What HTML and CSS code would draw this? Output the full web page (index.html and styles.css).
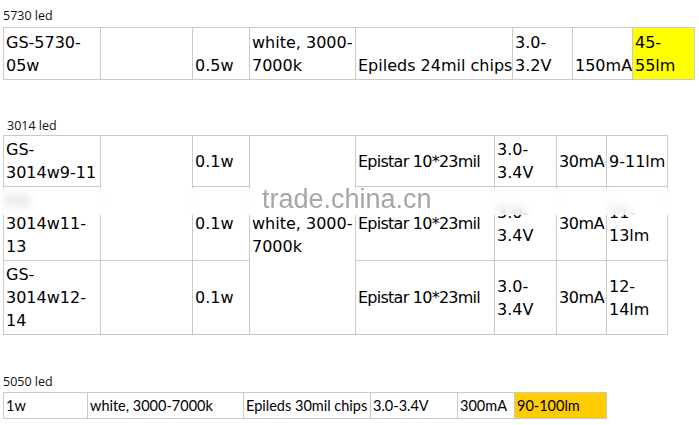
FILE: index.html
```html
<!DOCTYPE html>
<html lang="en">
<head>
<meta charset="utf-8">
<title>LED specs</title>
<link rel="stylesheet" href="styles.css">
</head>
<body>
<main class="page">
  <section class="block block-5730">
    <p class="label">5730 led</p>
    <table class="spec t1">
      <colgroup>
        <col class="c97"><col class="c92"><col class="c57"><col class="c106"><col class="c157"><col class="c60"><col class="c60"><col class="c62">
      </colgroup>
      <tr>
        <td>GS-5730-<br>05w</td>
        <td></td>
        <td>0.5w</td>
        <td>white, 3000-<br>7000k</td>
        <td>Epileds 24mil chips</td>
        <td>3.0-<br>3.2V</td>
        <td>150mA</td>
        <td class="hl-yellow">45-<br>55lm</td>
      </tr>
    </table>
  </section>

  <section class="block block-3014">
    <p class="label label-indent">3014 led</p>
    <table class="spec t2">
      <colgroup>
        <col class="c97"><col class="c92"><col class="c57"><col class="c106"><col class="c139"><col class="c62"><col class="c50"><col class="c61">
      </colgroup>
      <tr>
        <td>GS-<br>3014w9-11</td>
        <td rowspan="2"></td>
        <td>0.1w</td>
        <td rowspan="3">white, 3000-<br>7000k</td>
        <td class="tight">Epistar 10*23mil</td>
        <td>3.0-<br>3.4V</td>
        <td class="narrow">30mA</td>
        <td>9-11lm</td>
      </tr>
      <tr>
        <td>GS-<br>3014w11-<br>13</td>
        <td>0.1w</td>
        <td class="tight">Epistar 10*23mil</td>
        <td>3.0-<br>3.4V</td>
        <td class="narrow">30mA</td>
        <td>11-<br>13lm</td>
      </tr>
      <tr>
        <td>GS-<br>3014w12-<br>14</td>
        <td></td>
        <td>0.1w</td>
        <td class="tight">Epistar 10*23mil</td>
        <td>3.0-<br>3.4V</td>
        <td class="narrow">30mA</td>
        <td>12-<br>14lm</td>
      </tr>
    </table>
  </section>

  <section class="block block-5050">
    <p class="label">5050 led</p>
    <table class="spec t3">
      <colgroup>
        <col class="c84"><col class="c156"><col class="c127"><col class="c87"><col class="c57"><col class="c92">
      </colgroup>
      <tr>
        <td>1w</td>
        <td>white, 3000-7000k</td>
        <td>Epileds 30mil chips</td>
        <td>3.0-3.4V</td>
        <td>300mA</td>
        <td class="hl-orange">90-100lm</td>
      </tr>
    </table>
  </section>

  <div class="watermark" aria-hidden="true">
    <span class="wm-text">trade.china.cn</span>
  </div>
</main>
</body>
</html>
```

FILE: styles.css
```css
html, body {
  margin: 0;
  padding: 0;
  background: #ffffff;
}

.page {
  position: relative;
  width: 699px;
  height: 425px;
  overflow: hidden;
  padding: 9px 0 0 3px;
  box-sizing: border-box;
  display: flex;
  flex-direction: column;
  color: #000;
}

.block {
  display: flex;
  flex-direction: column;
}

.block-3014 { margin-top: 39px; }
.block-5050 { margin-top: 40px; }

.label {
  margin: 0;
  font-family: "Open Sans", "DejaVu Sans", sans-serif;
  font-size: 12.5px;
  line-height: 14px;
  color: #111;
}

.label-indent { padding-left: 4px; }

.block-5730 .label { margin-bottom: 4px; }
.block-3014 .label { margin-bottom: 2px; }
.block-5050 .label { margin-bottom: 3px; }

.spec {
  border-collapse: collapse;
  table-layout: fixed;
  font-family: "DejaVu Sans", Verdana, sans-serif;
  font-size: 16px;
  line-height: 23px;
}

.spec td {
  border: 1px solid #c9c9c9;
  padding: 3px 0 2px 2px;
  white-space: nowrap;
  overflow: visible;
  color: #000;
}

.t1 { width: 691px; }
.t1 td { vertical-align: bottom; }

.t2 { width: 664px; }
.t2 td {
  vertical-align: middle;
  padding: 2px 0 2px 2px;
}

.t3 {
  width: 603px;
  font-family: "Lato", "Open Sans", sans-serif;
  font-size: 14.5px;
  line-height: 20px;
}
.t3 td {
  padding: 3px 0 2px 2px;
  vertical-align: middle;
}

.tight { letter-spacing: -0.75px; }
.narrow { letter-spacing: -0.4px; }

.hl-yellow { background: #ffff00; }
.hl-orange { background: #ffcc00; }

.c50 { width: 50px; }
.c57 { width: 57px; }
.c60 { width: 60px; }
.c61 { width: 61px; }
.c62 { width: 62px; }
.c84 { width: 84px; }
.c87 { width: 87px; }
.c92 { width: 92px; }
.c97 { width: 97px; }
.c106 { width: 106px; }
.c127 { width: 127px; }
.c139 { width: 139px; }
.c156 { width: 156px; }
.c157 { width: 157px; }

.watermark {
  position: absolute;
  left: 0;
  top: 188px;
  width: 699px;
  height: 27px;
  background: rgba(255, 255, 255, 0.72);
  backdrop-filter: blur(4px);
}

.wm-text {
  position: absolute;
  left: 262px;
  top: -5px;
  font-family: "Liberation Sans", Arial, sans-serif;
  font-size: 27px;
  line-height: 32px;
  color: rgba(150, 150, 150, 0.85);
  white-space: nowrap;
}
```
